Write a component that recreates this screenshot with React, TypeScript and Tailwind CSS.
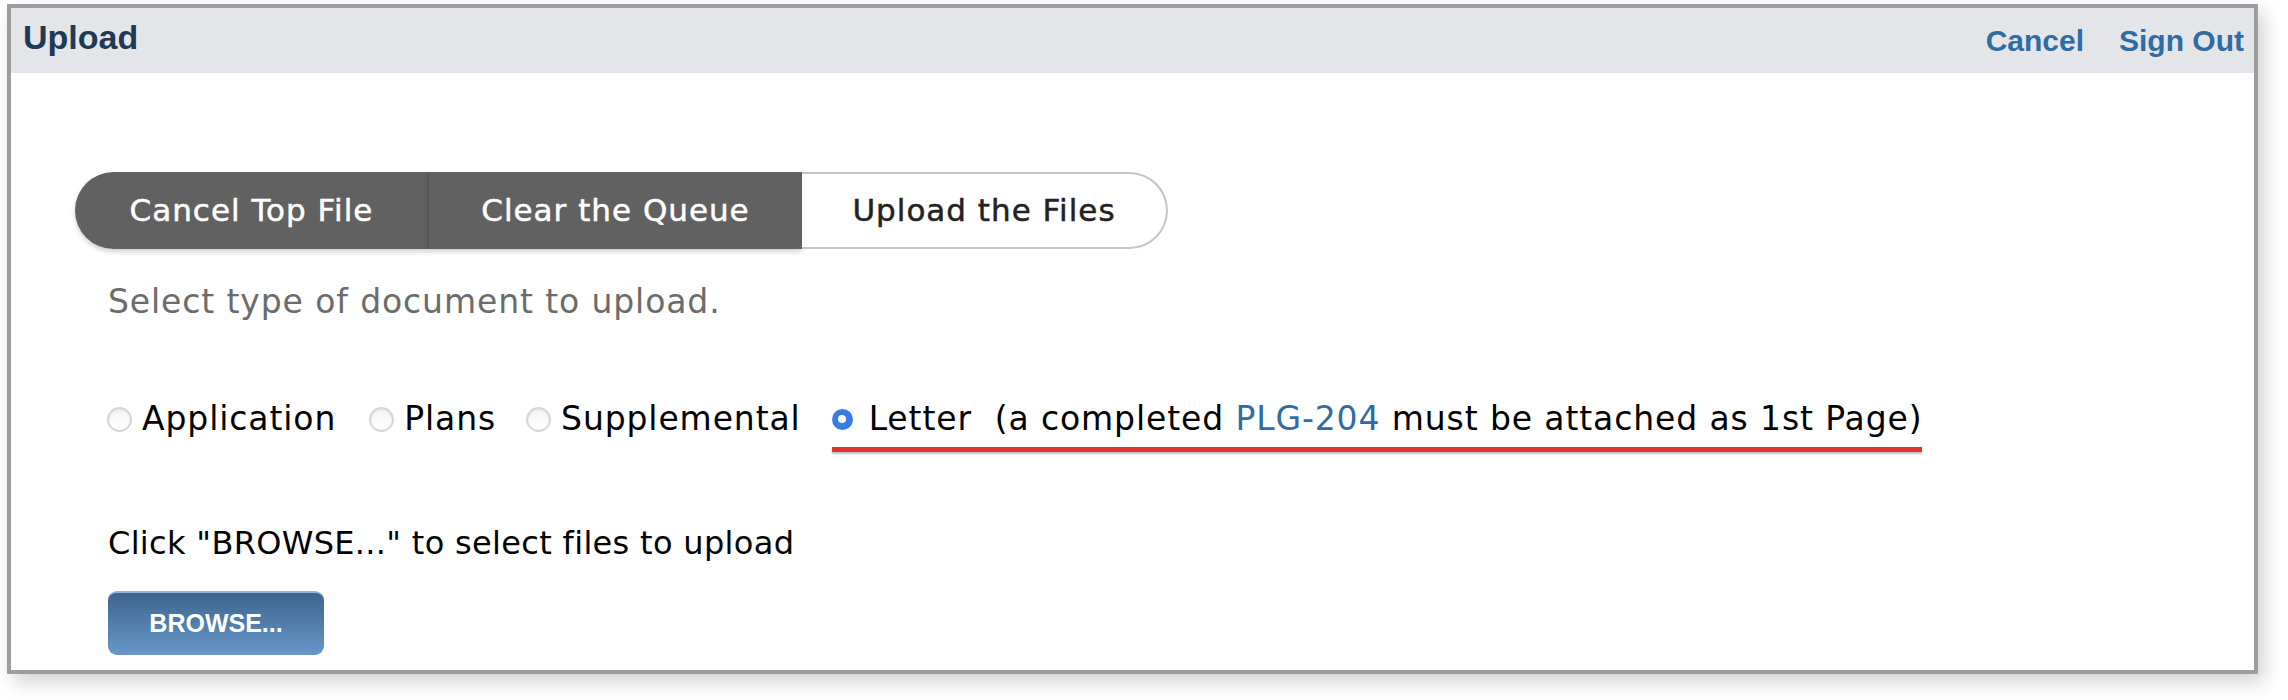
import React from "react";

const body = { fontFamily: '"DejaVu Sans", sans-serif' } as const;
const arial = { fontFamily: '"Liberation Sans", Arial, sans-serif' } as const;

function Radio({ checked = false }: { checked?: boolean }) {
  if (checked) {
    return (
      <span className="flex h-[21px] w-[21px] shrink-0 items-center justify-center rounded-full bg-[#3a7bea]">
        <span className="h-[8px] w-[8px] rounded-full bg-white" />
      </span>
    );
  }
  return (
    <span className="block h-[25px] w-[25px] shrink-0 rounded-full border-[2px] border-[#d6d6d6] bg-gradient-to-b from-[#f4f4f4] to-[#ffffff] shadow-[inset_0_1px_2px_rgba(0,0,0,0.08)]" />
  );
}

export default function App() {
  return (
    <div className="h-[700px] w-full bg-white pl-[7px] pt-[4px]">
      <div className="flex h-[670px] w-[2251px] flex-col border-[4px] border-[#9d9d9d] bg-white shadow-[6px_8px_18px_rgba(0,0,0,0.18)]">
        {/* Header */}
        <div className="flex h-[65px] shrink-0 items-center justify-between bg-[#e4e5e9] pl-[12px] pr-[10px]" style={arial}>
          <span className="pb-[6px] text-[34px] font-bold text-[#1e3a56]">Upload</span>
          <div className="flex items-center gap-[35px] text-[30px] font-bold text-[#2f6ca3]">
            <span>Cancel</span>
            <span>Sign Out</span>
          </div>
        </div>

        {/* Body */}
        <div className="flex flex-col pl-[64px]" style={body}>
          {/* Button group */}
          <div className="mt-[99px] flex h-[77px] text-[31px] tracking-[0.032em] [-webkit-text-stroke:0.5px_currentColor]">
            <div className="flex w-[353px] items-center justify-center rounded-l-full bg-[#616161] text-white shadow-[0_3px_5px_rgba(0,0,0,0.18)]">
              Cancel Top File
            </div>
            <div className="flex w-[374px] items-center justify-center border-l border-[#565656] bg-[#616161] text-white shadow-[0_3px_5px_rgba(0,0,0,0.18)]">
              Clear the Queue
            </div>
            <div className="flex w-[366px] items-center justify-center rounded-r-full border-[2px] border-l-0 border-[#c4c4c4] bg-white text-[#222222]">
              Upload the Files
            </div>
          </div>

          {/* Select type */}
          <div className="ml-[33px] mt-[29px] h-[48px] text-[33px] leading-[48px] tracking-[0.027em] text-[#6b6b6b]">
            Select type of document to upload.
          </div>

          {/* Radios */}
          <div className="ml-[32px] mt-[69px] flex items-start text-[33px] leading-[48px] tracking-[0.027em] text-black">
            <label className="flex h-[48px] items-center gap-[10px]">
              <Radio />
              <span>Application</span>
            </label>
            <label className="ml-[33px] flex h-[48px] items-center gap-[10px]">
              <Radio />
              <span>Plans</span>
            </label>
            <label className="ml-[30px] flex h-[48px] items-center gap-[10px]">
              <Radio />
              <span>Supplemental</span>
            </label>
            <div className="ml-[31px] flex flex-col">
              <label className="flex h-[48px] items-center gap-[16px]">
                <Radio checked />
                <span className="whitespace-pre">
                  Letter{"  "}(a completed <span className="text-[#2f6ca3]">PLG-204</span> must be attached as 1st Page)
                </span>
              </label>
              <div className="mt-[4px] h-[5px] w-full bg-[#e0342b] shadow-[0_2px_2px_rgba(0,0,0,0.25)]" />
            </div>
          </div>

          {/* Click browse */}
          <div className="ml-[33px] mt-[67px] h-[48px] text-[32px] leading-[48px] tracking-[0.01em] text-black">
            Click "BROWSE..." to select files to upload
          </div>

          {/* Browse button */}
          <div className="ml-[33px] mt-[24px]">
            <button
              className="flex h-[64px] w-[216px] items-center justify-center rounded-[9px] border-t-[2px] border-[#8bb4dc] bg-gradient-to-b from-[#3e6590] to-[#6797c8] text-[25px] font-bold text-white"
              style={arial}
            >
              BROWSE...
            </button>
          </div>
        </div>
      </div>
    </div>
  );
}
